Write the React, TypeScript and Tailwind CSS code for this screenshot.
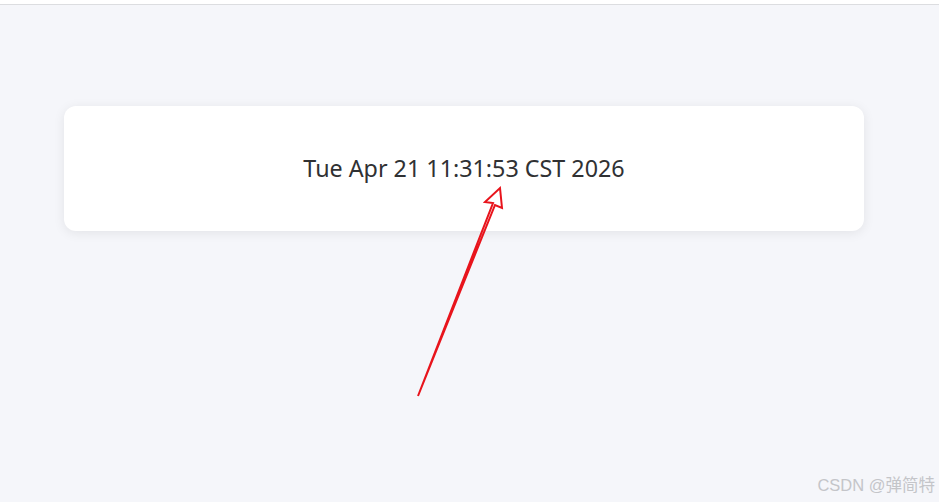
export default function App() {
  return (
    <div className="relative h-[502px] w-full overflow-hidden bg-white" style={{ fontFamily: '"Noto Sans", "Open Sans", sans-serif' }}>
      <div className="h-[4px] bg-white" />
      <div className="h-[498px] border-t border-[#dcdde0] bg-[#f5f6fa] pl-[64px] pt-[101px]">
        <div className="flex h-[125px] w-[800px] items-center justify-center rounded-[12px] bg-white shadow-[0_2px_12px_rgba(0,0,0,0.08)]">
          <span className="text-[23.3px] text-[#303133]">Tue Apr 21 11:31:53 CST 2026</span>
        </div>
      </div>

      {/* red annotation arrow */}
      <svg className="absolute left-0 top-0" width="939" height="502" viewBox="0 0 939 502">
        <path
          d="M418 396 L493 203 L485 202 L500 188 L502 208 L495 205 L418 396 Z"
          fill="none"
          stroke="#e8141c"
          strokeWidth="2"
          strokeLinejoin="miter"
        />
      </svg>

      <div className="absolute bottom-[4px] right-[4px] text-[16.5px] text-[#c4c5c9]" style={{ fontFamily: '"Liberation Sans", "Noto Sans CJK SC", sans-serif' }}>
        CSDN @弹简特
      </div>
    </div>
  );
}
